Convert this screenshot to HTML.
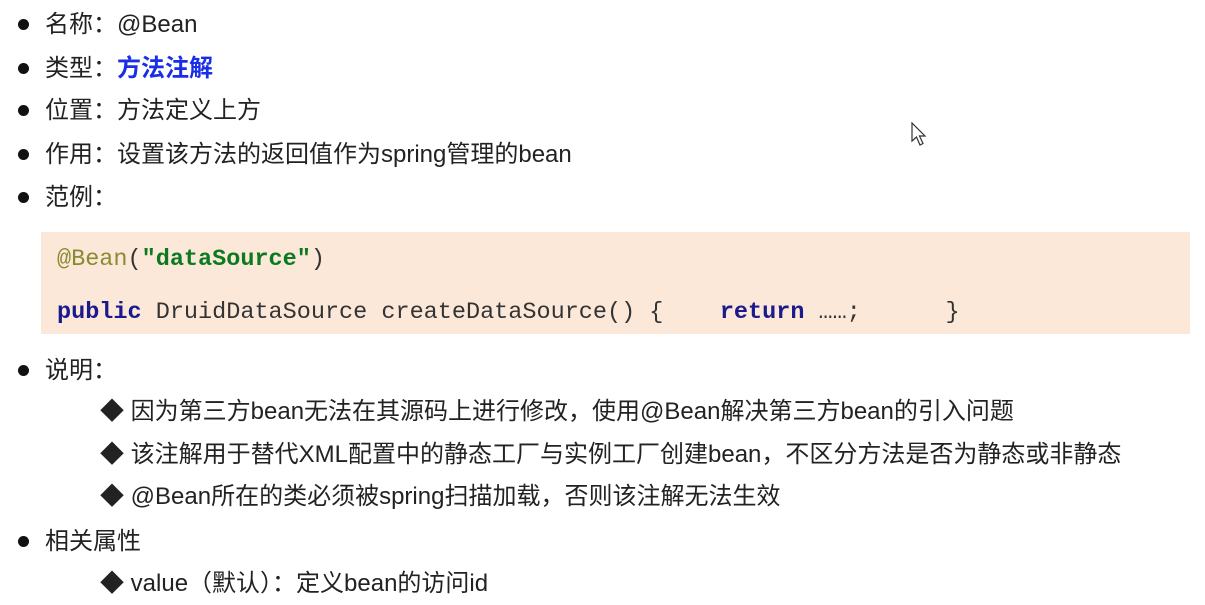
<!DOCTYPE html>
<html><head><meta charset="utf-8"><style>
body{margin:0;width:1205px;height:605px;background:#fff;position:relative;overflow:hidden;font-family:"Liberation Sans","Noto Sans CJK SC",sans-serif;color:#222;}
.l{position:absolute;font-size:24px;line-height:28px;white-space:nowrap;}
.b{position:absolute;width:11px;height:11px;border-radius:50%;background:#111;}
.code{position:absolute;left:41px;top:232px;width:1149px;height:102px;background:#fce8d8;}
.c{position:absolute;font-family:"Liberation Mono",monospace;font-size:23.5px;line-height:26px;white-space:nowrap;color:#333;}
.kw{color:#1a1a8c;font-weight:bold}
</style></head><body>
<div class="b" style="left:18px;top:19px"></div><div class="l" style="left:45px;top:11px">名称：@Bean</div>
<div class="b" style="left:18px;top:63px"></div><div class="l" style="left:45px;top:55px">类型：<b style="color:#1a2ee8">方法注解</b></div>
<div class="b" style="left:18px;top:105px"></div><div class="l" style="left:45px;top:97px">位置：方法定义上方</div>
<div class="b" style="left:18px;top:149px"></div><div class="l" style="left:45px;top:141px">作用：设置该方法的返回值作为spring管理的bean</div>
<div class="b" style="left:18px;top:192px"></div><div class="l" style="left:45px;top:184px">范例：</div>
<div class="code"></div>
<div class="c" style="left:57px;top:247px"><span style="color:#8a8a30">@Bean</span>(<b style="color:#0a7a20">"dataSource"</b>)</div>
<div class="c" style="left:57px;top:300px"><span class="kw">public</span> DruidDataSource createDataSource() {&nbsp;&nbsp;&nbsp;&nbsp;<span class="kw">return</span> ……;&nbsp;&nbsp;&nbsp;&nbsp;&nbsp;&nbsp;}</div>
<div class="b" style="left:18px;top:365px"></div><div class="l" style="left:45px;top:357px">说明：</div>
<div class="l" style="left:100px;top:398px">◆ 因为第三方bean无法在其源码上进行修改，使用@Bean解决第三方bean的引入问题</div>
<div class="l" style="left:100px;top:441px">◆ 该注解用于替代XML配置中的静态工厂与实例工厂创建bean，不区分方法是否为静态或非静态</div>
<div class="l" style="left:100px;top:483px">◆ @Bean所在的类必须被spring扫描加载，否则该注解无法生效</div>
<div class="b" style="left:18px;top:536px"></div><div class="l" style="left:45px;top:528px">相关属性</div>
<div class="l" style="left:100px;top:570px">◆ value（默认）：定义bean的访问id</div>
<svg style="position:absolute;left:911px;top:122px" width="20" height="26" viewBox="0 0 20 26"><path d="M1 1 L1 19 L5.5 15 L9 23 L12 21.5 L8.5 14 L14 14 Z" fill="#fff" stroke="#333" stroke-width="1.2"/></svg>
</body></html>
